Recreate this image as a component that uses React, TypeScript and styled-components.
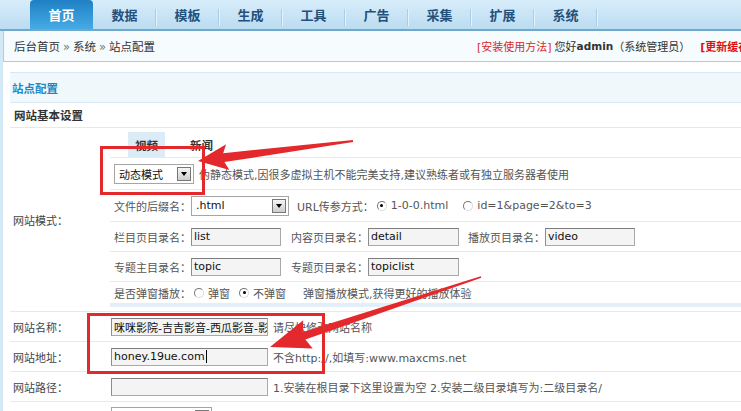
import React from 'react';
import styled, { createGlobalStyle } from 'styled-components';

const RED = '#e4292c';
const LINE = '#dcecf6';

const GlobalStyle = createGlobalStyle`
  * { box-sizing: border-box; }
  html, body { margin: 0; padding: 0; background: #fff; }
  body {
    font-family: "DejaVu Sans", "Noto Sans CJK SC", sans-serif;
    font-size: 11px;
    color: #444;
  }
`;

const Frame = styled.div`
  position: relative;
  width: 741px;
  height: 411px;
  overflow: hidden;
  background: #fff;
`;

const NavBar = styled.div`
  display: flex;
  height: 31px;
  padding-left: 30px;
  background: linear-gradient(#d8edfa, #bbdcf1);
  border-bottom: 2px solid #6ea8cb;
`;

const NavTab = styled.div<{ $active?: boolean }>`
  position: relative;
  width: 63px;
  display: flex;
  align-items: center;
  justify-content: center;
  font-family: "Noto Sans CJK SC", sans-serif;
  font-size: 13px;
  font-weight: bold;
  color: ${({ $active }) => ($active ? '#fff' : '#24507a')};
  background: ${({ $active }) =>
    $active ? 'linear-gradient(#1f7fc4, #46abe5)' : 'transparent'};
  border-radius: ${({ $active }) => ($active ? '4px 4px 0 0' : '0')};

  &::after {
    content: ${({ $active }) => ($active ? 'none' : "''")};
    position: absolute;
    right: 0;
    top: 9px;
    bottom: 3px;
    width: 1px;
    background: #a9cfe8;
    box-shadow: 1px 0 0 #e4f2fb;
  }
`;

const Body = styled.div`
  display: flex;
  height: 380px;
  overflow: hidden;
`;

const SideStrip = styled.div`
  flex: none;
  width: 3px;
  background: #d3e9f6;
`;

const Main = styled.div`
  flex: 1;
  min-width: 0;
`;

const TopBar = styled.div`
  height: 31px;
  display: flex;
  align-items: center;
  padding-left: 10px;
  background: #f6fbfe;
  border-left: 1px solid #a6cfe6;
  border-bottom: 1px solid #a6cfe6;
  white-space: nowrap;
  color: #333;
`;

const Crumbs = styled.div`
  flex: 0 0 463px;
  font-size: 11.5px;
`;

const Sep = styled.span`
  color: #777;
  margin: 0 3px;
`;

const UserInfo = styled.div`
  display: flex;
  align-items: center;
  font-size: 11px;
`;

const RedLink = styled.span<{ $bold?: boolean }>`
  color: ${({ $bold }) => ($bold ? '#e01010' : '#d42b2b')};
  font-weight: ${({ $bold }) => ($bold ? 'bold' : 'normal')};
  margin-left: ${({ $bold }) => ($bold ? '10px' : '0')};
  margin-right: ${({ $bold }) => ($bold ? '0' : '3px')};
`;

const UserName = styled.b`
  font-size: 10.5px;
`;

const Content = styled.div`
  padding: 10px 0 0 7px;
`;

const PanelTitle = styled.div`
  height: 31px;
  display: flex;
  align-items: center;
  padding-left: 2px;
  background: #f0f8fc;
  border-top: 1px solid #d6e9f5;
  border-bottom: 1px solid #d6e9f5;
  color: #1b8ac6;
  font-weight: bold;
  font-size: 11.5px;
`;

const SectionTitle = styled.div`
  height: 25px;
  display: flex;
  align-items: center;
  padding-left: 4px;
  border-bottom: 1px solid ${LINE};
  color: #333;
  font-weight: bold;
  font-size: 11.5px;
`;

const FormRow = styled.div<{ $h?: number }>`
  display: grid;
  grid-template-columns: 100px 1fr;
  min-height: ${({ $h }) => $h ?? 30}px;
  border-bottom: 1px solid ${LINE};
`;

const Label = styled.div`
  display: flex;
  align-items: center;
  padding-left: 3px;
  color: #444;
  white-space: nowrap;
`;

const Cell = styled.div`
  display: flex;
  align-items: center;
  padding-left: 1px;
  white-space: nowrap;
`;

const SubTable = styled.div`
  display: flex;
  flex-direction: column;
  padding-bottom: 4px;
`;

const SubRow = styled.div<{ $h: number; $line?: boolean }>`
  flex: none;
  height: ${({ $h }) => $h}px;
  display: flex;
  align-items: center;
  padding-left: 4px;
  white-space: nowrap;
  color: #555;
  border-bottom: ${({ $line }) => ($line ? `1px solid ${LINE}` : 'none')};
`;

const TabsRow = styled.div`
  flex: none;
  height: 30px;
  display: flex;
  align-items: flex-end;
  gap: 18px;
  padding-left: 18px;
  border-bottom: 1px solid ${LINE};
`;

const ModeTab = styled.div<{ $active?: boolean }>`
  width: 37px;
  height: 25px;
  display: flex;
  align-items: center;
  justify-content: center;
  font-weight: bold;
  font-size: 11.5px;
  color: #333;
  background: ${({ $active }) => ($active ? '#dcecf7' : 'transparent')};
`;

const Band = styled.div`
  flex: none;
  height: 4px;
  background: #e2eff8;
`;

const Field = styled.div<{ $w: number }>`
  width: ${({ $w }) => $w}px;
  height: 18px;
  flex: none;
  display: flex;
  align-items: center;
  padding: 0 2px;
  overflow: hidden;
  white-space: nowrap;
  background: #f4f4f4;
  border: 1px solid #a9a9a9;
  border-top-color: #7d7d7d;
  border-left-color: #8c8c8c;
  color: #111;
  font-size: 11px;
`;

const Caret = styled.span`
  display: inline-block;
  flex: none;
  width: 1px;
  height: 13px;
  margin-left: 1px;
  background: #000;
`;

const Select = styled.div<{ $w: number }>`
  width: ${({ $w }) => $w}px;
  height: 20px;
  flex: none;
  display: flex;
  align-items: center;
  justify-content: space-between;
  padding: 0 2px 0 4px;
  background: #fff;
  border: 1px solid #a5a5a5;
  color: #111;
`;

const SelectArrow = styled.span`
  width: 14px;
  height: 14px;
  display: flex;
  align-items: center;
  justify-content: center;
  background: linear-gradient(#f5f5f5, #cdcdcd);
  border: 1px solid #777;

  &::before {
    content: '';
    border-left: 3px solid transparent;
    border-right: 3px solid transparent;
    border-top: 4px solid #000;
  }
`;

const FieldLabel = styled.span<{ $gap?: number }>`
  margin-left: ${({ $gap }) => $gap ?? 0}px;
  color: #555;
`;

const Hint = styled.span<{ $gap?: number }>`
  margin-left: ${({ $gap }) => $gap ?? 5}px;
  color: #555;
`;

const Option = styled.span<{ $gap?: number }>`
  display: inline-flex;
  align-items: center;
  gap: 4px;
  margin-left: ${({ $gap }) => $gap ?? 0}px;
  color: #555;
`;

const Radio = styled.span<{ $checked?: boolean }>`
  position: relative;
  display: inline-block;
  width: 10px;
  height: 10px;
  border-radius: 50%;
  background: #fff;
  border: 1px solid #dadada;
  border-top-color: #777;
  border-left-color: #777;

  &::after {
    content: ${({ $checked }) => ($checked ? "''" : 'none')};
    position: absolute;
    left: 2.5px;
    top: 2.5px;
    width: 3px;
    height: 3px;
    border-radius: 50%;
    background: #000;
  }
`;

const Overlay = styled.svg`
  position: absolute;
  left: 0;
  top: 0;
  pointer-events: none;
`;

const navItems = ['首页', '数据', '模板', '生成', '工具', '广告', '采集', '扩展', '系统'];

type Pt = [number, number];

// red pointer arrow: thin tail, widening shaft, swept head
function arrowPoints(
  tail: Pt,
  tip: Pt,
  headLen: number,
  headHalf: number,
  tailHalf: number,
  neckHalf: number
): string {
  const [tx, ty] = tail;
  const [px, py] = tip;
  const len = Math.hypot(px - tx, py - ty);
  const ux = (px - tx) / len;
  const uy = (py - ty) / len;
  const nx = -uy;
  const ny = ux;
  const bx = px - ux * headLen;
  const by = py - uy * headLen;
  const wx = bx - ux * 4;
  const wy = by - uy * 4;
  const pts: Pt[] = [
    [tx + nx * tailHalf, ty + ny * tailHalf],
    [bx + nx * neckHalf, by + ny * neckHalf],
    [wx + nx * headHalf, wy + ny * headHalf],
    [px, py],
    [wx - nx * headHalf, wy - ny * headHalf],
    [bx - nx * neckHalf, by - ny * neckHalf],
    [tx - nx * tailHalf, ty - ny * tailHalf],
  ];
  return pts.map((p) => p.map((v) => v.toFixed(1)).join(',')).join(' ');
}

const App: React.FC = () => {
  return (
    <>
      <GlobalStyle />
      <Frame>
        <NavBar>
          {navItems.map((item, i) => (
            <NavTab key={item} $active={i === 0}>
              {item}
            </NavTab>
          ))}
        </NavBar>

        <Body>
          <SideStrip />
          <Main>
            <TopBar>
              <Crumbs>
                后台首页<Sep>»</Sep>系统<Sep>»</Sep>站点配置
              </Crumbs>
              <UserInfo>
                <RedLink>[安装使用方法]</RedLink>
                您好<UserName>admin</UserName>（系统管理员）
                <RedLink $bold>[更新缓存]</RedLink>
              </UserInfo>
            </TopBar>

            <Content>
              <PanelTitle>站点配置</PanelTitle>
              <SectionTitle>网站基本设置</SectionTitle>

              <FormRow>
                <Label>网站模式：</Label>
                <SubTable>
                  <TabsRow>
                    <ModeTab $active>视频</ModeTab>
                    <ModeTab>新闻</ModeTab>
                  </TabsRow>
                  <SubRow $h={32} $line>
                    <Select $w={80}>
                      动态模式
                      <SelectArrow />
                    </Select>
                    <Hint>伪静态模式,因很多虚拟主机不能完美支持,建议熟练者或有独立服务器者使用</Hint>
                  </SubRow>
                  <SubRow $h={32} $line>
                    <FieldLabel>文件的后缀名：</FieldLabel>
                    <Select $w={98}>
                      .html
                      <SelectArrow />
                    </Select>
                    <FieldLabel $gap={8}>URL传参方式：</FieldLabel>
                    <Option $gap={3}>
                      <Radio $checked />
                      1-0-0.html
                    </Option>
                    <Option $gap={15}>
                      <Radio />
                      id=1&amp;page=2&amp;to=3
                    </Option>
                  </SubRow>
                  <SubRow $h={30} $line>
                    <FieldLabel>栏目页目录名：</FieldLabel>
                    <Field $w={90}>list</Field>
                    <FieldLabel $gap={10}>内容页目录名：</FieldLabel>
                    <Field $w={91}>detail</Field>
                    <FieldLabel $gap={9}>播放页目录名：</FieldLabel>
                    <Field $w={90}>video</Field>
                  </SubRow>
                  <SubRow $h={30} $line>
                    <FieldLabel>专题主目录名：</FieldLabel>
                    <Field $w={90}>topic</Field>
                    <FieldLabel $gap={10}>专题页目录名：</FieldLabel>
                    <Field $w={91}>topiclist</Field>
                  </SubRow>
                  <SubRow $h={21}>
                    <FieldLabel>是否弹窗播放：</FieldLabel>
                    <Option $gap={3}>
                      <Radio />
                      弹窗
                    </Option>
                    <Option $gap={9}>
                      <Radio $checked />
                      不弹窗
                    </Option>
                    <Hint $gap={17}>弹窗播放模式,获得更好的播放体验</Hint>
                  </SubRow>
                  <Band />
                </SubTable>
              </FormRow>

              <FormRow>
                <Label>网站名称：</Label>
                <Cell>
                  <Field $w={157}>咪咪影院-吉吉影音-西瓜影音-影视</Field>
                  <Hint>请尽快修改网站名称</Hint>
                </Cell>
              </FormRow>
              <FormRow>
                <Label>网站地址：</Label>
                <Cell>
                  <Field $w={157}>
                    honey.19ue.com
                    <Caret />
                  </Field>
                  <Hint>不含http://,如填写:www.maxcms.net</Hint>
                </Cell>
              </FormRow>
              <FormRow>
                <Label>网站路径：</Label>
                <Cell>
                  <Field $w={157} />
                  <Hint>1.安装在根目录下这里设置为空 2.安装二级目录填写为:二级目录名/</Hint>
                </Cell>
              </FormRow>
              <FormRow>
                <Label>网站模板选择：</Label>
                <Cell>
                  <Select $w={101}>
                    default
                    <SelectArrow />
                  </Select>
                </Cell>
              </FormRow>
            </Content>
          </Main>
        </Body>

        <Overlay width={741} height={411} viewBox="0 0 741 411">
          <rect x={101.5} y={147.5} width={102} height={46} fill="none" stroke={RED} strokeWidth={3} />
          <rect x={88.5} y={314.5} width={235} height={58} fill="none" stroke={RED} strokeWidth={3} />
          <polygon points={arrowPoints([353, 141], [198, 161], 26, 13, 1, 4.5)} fill={RED} />
          <polygon points={arrowPoints([481, 277], [270, 347], 36, 15, 0.8, 4)} fill={RED} />
        </Overlay>
      </Frame>
    </>
  );
};

export default App;
